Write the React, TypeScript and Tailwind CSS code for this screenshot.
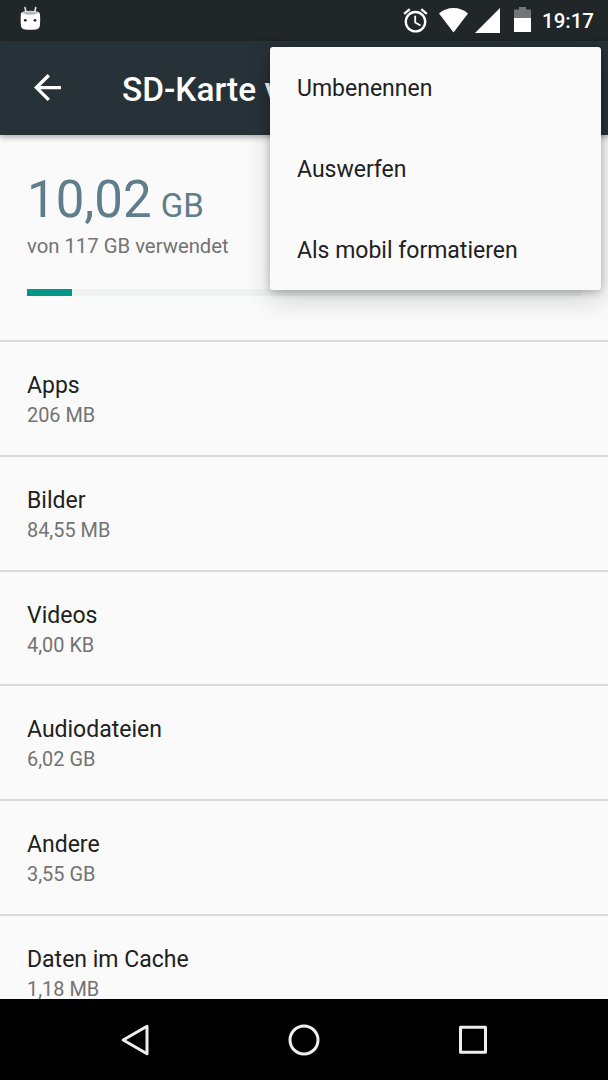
import React from 'react';

interface StorageItem {
  title: string;
  size: string;
}

const storageItems: StorageItem[] = [
  { title: 'Apps', size: '206 MB' },
  { title: 'Bilder', size: '84,55 MB' },
  { title: 'Videos', size: '4,00 KB' },
  { title: 'Audiodateien', size: '6,02 GB' },
  { title: 'Andere', size: '3,55 GB' },
  { title: 'Daten im Cache', size: '1,18 MB' },
];

const menuItems = ['Umbenennen', 'Auswerfen', 'Als mobil formatieren'];

const StatusBar: React.FC = () => (
  <div className="flex h-[41px] shrink-0 items-start bg-[#212628] pr-[14px] pl-[20px] text-white">
    <svg className="mt-[6px] h-6 w-[21px]" viewBox="0 0 21 24" fill="none">
      <path d="M5 1.5 6.2 7M15.7 1.5 14.5 7" stroke="#e4e6e7" strokeWidth="1.6" strokeLinecap="round" />
      <path d="M1 7.5Q1.4 6 4 5.4Q10.3 4.2 16.7 5.4Q19.4 6 19.8 7.5Q20.6 14 19.7 20.5Q19.2 22.8 17 23.2Q10.3 24.2 3.8 23.2Q1.6 22.8 1.1 20.5Q.2 14 1 7.5Z" fill="#fff" />
      <path d="M2 6.8Q10.3 3.6 18.8 6.8Q16 8.8 10.3 8.8Q4.6 8.8 2 6.8Z" fill="#b5b8b9" />
      <circle cx="5.3" cy="14.3" r="1.4" fill="#212628" />
      <circle cx="15" cy="14.3" r="1.4" fill="#212628" />
    </svg>
    <svg className="mt-[6px] ml-auto h-[29px] w-[29px]" viewBox="0 0 24 24" fill="currentColor">
      <path d="M22 5.72l-4.6-3.86-1.29 1.53 4.6 3.86L22 5.72zM7.88 3.39L6.6 1.86 2 5.71l1.29 1.53 4.59-3.85zM12.5 8H11v6l4.75 2.85.75-1.23-4-2.37V8zM12 4c-4.97 0-9 4.03-9 9s4.02 9 9 9a9 9 0 0 0 0-18zm0 16c-3.87 0-7-3.13-7-7s3.13-7 7-7 7 3.13 7 7-3.13 7-7 7z" />
    </svg>
    <svg className="mt-2 ml-[9px] h-[25px] w-[29px]" viewBox="0 0 29 25" fill="currentColor">
      <path d="M0 5.6Q6.2.1 14.5.1T29 5.6L14.5 24.4Z" />
    </svg>
    <svg className="mt-2 ml-[7px] h-[25px] w-[25px]" viewBox="0 0 25 25" fill="currentColor">
      <path d="M25 0V25H0Z" />
    </svg>
    <svg className="mt-[7px] ml-[14px] h-[25px] w-[17px]" viewBox="0 0 17 25" fill="currentColor">
      <path d="M5 0H12V2.5H17V11H0V2.5H5Z" fill="#737677" />
      <path d="M0 11H17V25H0Z" />
    </svg>
    <span className="ml-[11px] w-[52px] text-[20.5px] leading-[42px] font-medium whitespace-nowrap">19:17</span>
  </div>
);

const StorageRow: React.FC<{ item: StorageItem }> = ({ item }) => (
  <div className="h-[114.75px] shrink-0 border-t-2 border-[#dadada] px-[27px] pt-[29px]">
    <div className="text-[23px] leading-[30px] text-[#212121]">{item.title}</div>
    <div className="text-[19.9px] leading-[29px] text-[#737373]">{item.size}</div>
  </div>
);

const App: React.FC = () => {
  return (
    <div className="relative flex h-[1080px] w-[608px] flex-col overflow-hidden bg-[#fafafa] font-['Roboto',sans-serif]">
      <StatusBar />

      <header className="relative flex h-[94px] shrink-0 items-center bg-[#263238] pl-[34px] text-white shadow-[0_2px_6px_rgba(0,0,0,0.35)]">
        <svg className="h-7 w-7" viewBox="0 0 28 28" fill="none" stroke="currentColor" strokeWidth="3.4">
          <path d="M27 13.6H3M14.8 1.3 2.4 13.6 14.8 25.9" />
        </svg>
        <h1 className="ml-[60px] pt-[5px] text-[33.4px] font-medium whitespace-nowrap">SD-Karte v</h1>
      </header>

      <main className="flex min-h-0 flex-1 flex-col overflow-hidden">
        <section className="h-[205px] shrink-0 px-[27px] pt-[35px]">
          <div className="h-[60px] leading-[60px] whitespace-nowrap text-[#607d8b]">
            <span className="text-[51px]">10,02</span>
            <span className="ml-[9px] text-[33px]">GB</span>
          </div>
          <div className="mt-[1px] text-[20.3px] leading-[30px] text-[#737373]">von 117 GB verwendet</div>
          <div className="mt-[28px] h-[7px] bg-[#f0f1f1]">
            <div className="h-full w-[45px] bg-[#009688]" />
          </div>
        </section>

        {storageItems.map((item) => (
          <StorageRow key={item.title} item={item} />
        ))}
      </main>

      <nav className="flex h-[81px] shrink-0 items-center justify-center gap-[137px] bg-black text-[#eeeeee]">
        <svg className="h-8 w-8" viewBox="0 0 32 32" fill="none" stroke="currentColor" strokeWidth="3" strokeLinejoin="round">
          <path d="M28 2.2V29.8L4.2 16Z" />
        </svg>
        <svg className="h-8 w-8" viewBox="0 0 32 32" fill="none" stroke="currentColor" strokeWidth="3">
          <circle cx="16" cy="16" r="14" />
        </svg>
        <svg className="h-8 w-8" viewBox="0 0 32 32" fill="none" stroke="currentColor" strokeWidth="3" strokeLinejoin="round">
          <path d="M3.5 3.3H28.5V28.3H3.5Z" />
        </svg>
      </nav>

      {/* Overflow menu */}
      <div className="absolute top-[47px] right-[7px] h-[243px] w-[331px] rounded-[3px] bg-[#fafafa] shadow-[0_10px_28px_rgba(0,0,0,0.16),0_2px_8px_rgba(0,0,0,0.25)]">
        {menuItems.map((label) => (
          <div key={label} className="flex h-[81px] items-center px-[27px] pt-[4px] text-[23px] text-[#212121]">
            {label}
          </div>
        ))}
      </div>
    </div>
  );
};

export default App;
